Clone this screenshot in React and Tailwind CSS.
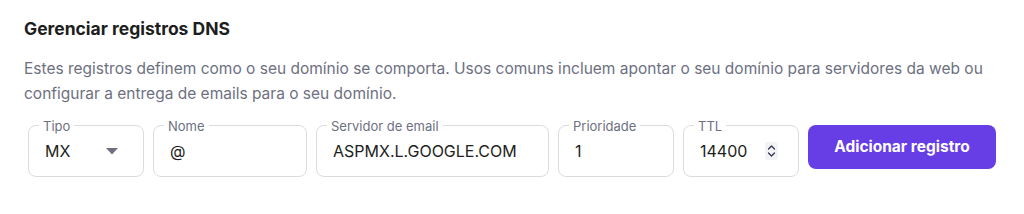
function Field({ label, width, children }) {
  return (
    <div
      className={`relative h-[52px] shrink-0 rounded-lg border border-[#dadce0] bg-white ${width}`}
    >
      <span className="absolute -top-[8px] left-[10px] bg-white px-1 text-[13px] leading-[16px] text-[#6d7081]">
        {label}
      </span>
      <div className="flex h-full items-center pl-[16px] pr-3 text-[16px] text-[#1d1e20]">
        {children}
      </div>
    </div>
  );
}

function CaretDown() {
  return (
    <svg width="12" height="7" viewBox="0 0 12 7" className="ml-auto mr-[13px]">
      <path d="M0 0h12L6 6.5z" fill="#6d7081" />
    </svg>
  );
}

function Spinner() {
  return (
    <div className="ml-auto mr-[8px] flex h-[18px] w-[13px] flex-col items-center justify-center rounded-[3px] bg-[#f2f3f6]">
      <svg width="9" height="14" viewBox="0 0 9 14">
        <path
          d="M1.5 5L4.5 2l3 3M1.5 9l3 3 3-3"
          fill="none"
          stroke="#36344d"
          strokeWidth="1.3"
          strokeLinecap="round"
          strokeLinejoin="round"
        />
      </svg>
    </div>
  );
}

export default function App() {
  return (
    <div className="h-[214px] w-[1024px] bg-white font-['Inter',sans-serif]">
      <div className="px-6 pt-[17px]">
        <h2 className="text-[17.5px] font-bold leading-[24px] text-[#1d1e20]">
          Gerenciar registros DNS
        </h2>
        <p className="mt-[15px] text-[15.5px] leading-[25px] text-[#6d7081]">
          Estes registros definem como o seu domínio se comporta. Usos comuns
          incluem apontar o seu domínio para servidores da web ou
          <br />
          configurar a entrega de emails para o seu domínio.
        </p>
        <div className="mt-[19px] flex items-start gap-[9px] pl-1">
          <Field label="Tipo" width="w-[116px]">
            MX
            <CaretDown />
          </Field>
          <Field label="Nome" width="w-[154px]">
            @
          </Field>
          <Field label="Servidor de email" width="w-[233px]">
            ASPMX.L.GOOGLE.COM
          </Field>
          <Field label="Prioridade" width="w-[116px]">
            1
          </Field>
          <Field label="TTL" width="w-[116px]">
            14400
            <Spinner />
          </Field>
          <button className="h-[44px] w-[188px] rounded-lg bg-[#673de6] text-[15.5px] font-bold text-white">
            Adicionar registro
          </button>
        </div>
      </div>
    </div>
  );
}
